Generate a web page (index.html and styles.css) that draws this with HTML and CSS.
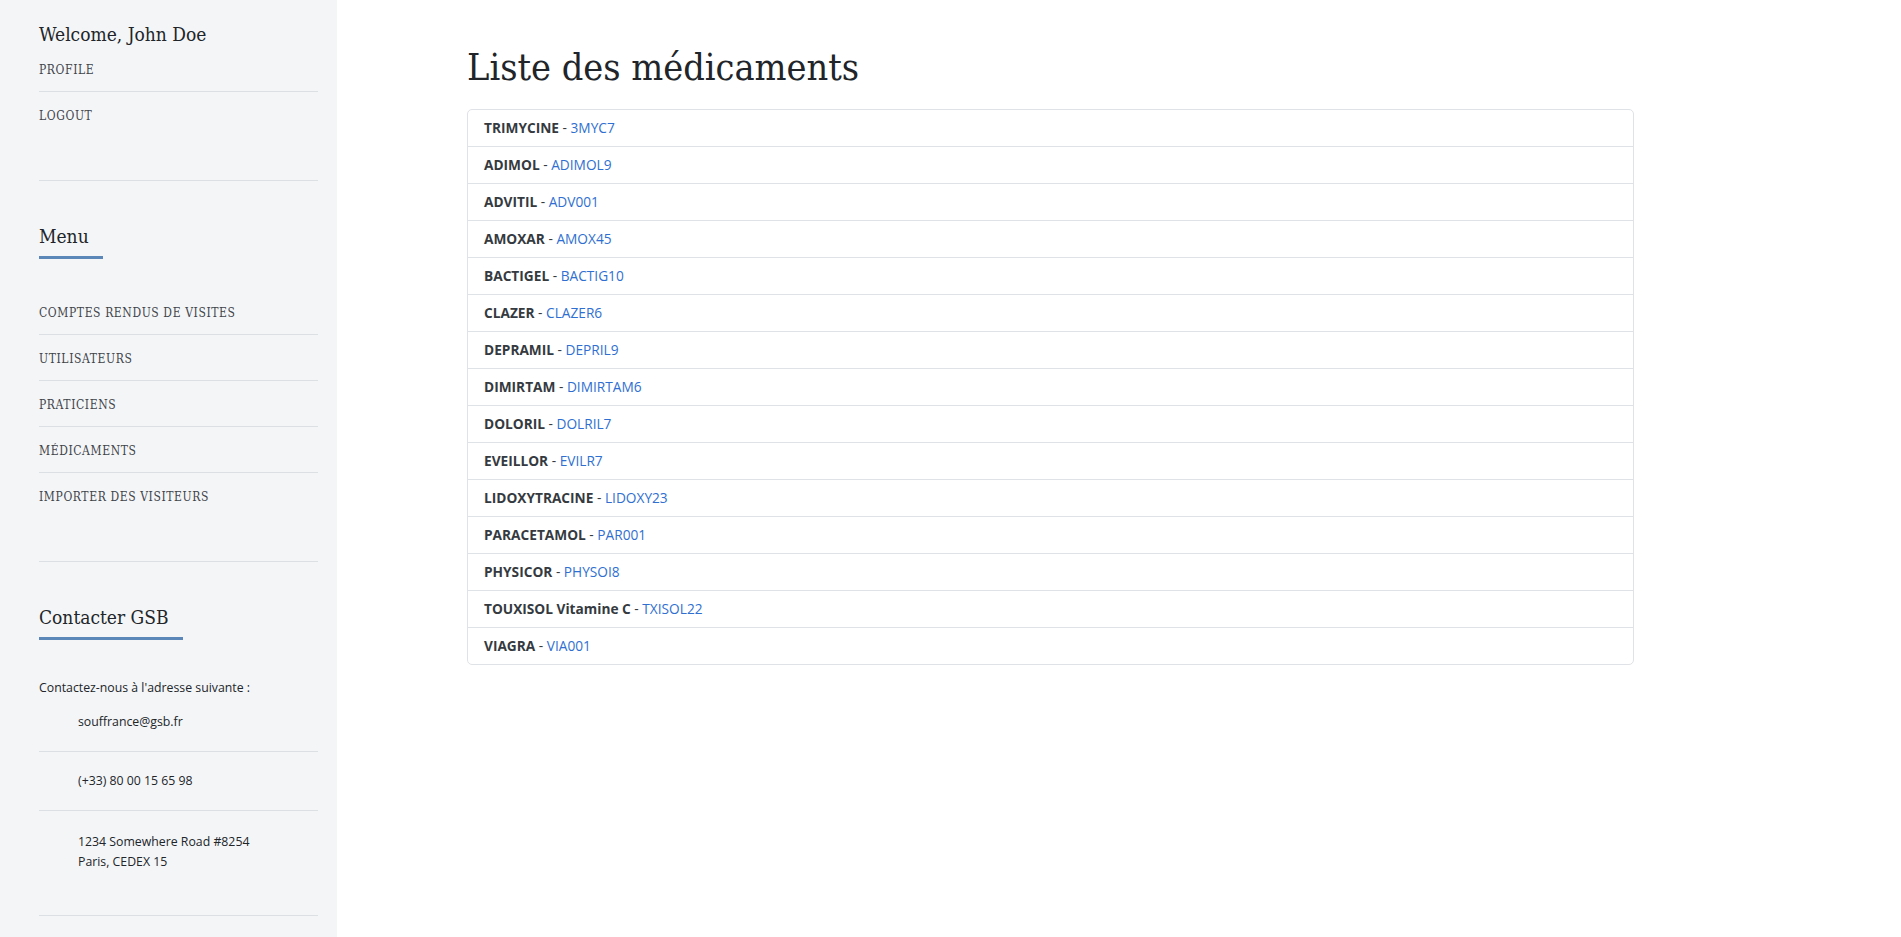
FILE: index.html
```html
<!DOCTYPE html>
<html lang="fr">
<head>
<meta charset="utf-8">
<title>Liste des médicaments</title>
<link rel="stylesheet" href="styles.css">
</head>
<body>
<aside class="sidebar">
  <section class="block block-user">
    <h3 class="welcome">Welcome, John Doe</h3>
    <ul class="nav">
      <li><a href="#">Profile</a></li>
      <li><a href="#">Logout</a></li>
    </ul>
  </section>
  <section class="block">
    <h2 class="block-title">Menu</h2>
    <ul class="nav nav-menu">
      <li><a href="#">Comptes rendus de visites</a></li>
      <li><a href="#">Utilisateurs</a></li>
      <li><a href="#">Praticiens</a></li>
      <li><a href="#">Médicaments</a></li>
      <li><a href="#">Importer des visiteurs</a></li>
    </ul>
  </section>
  <section class="block block-contact">
    <h2 class="block-title">Contacter GSB</h2>
    <p class="contact-intro">Contactez-nous à l'adresse suivante :</p>
    <ul class="contact">
      <li class="contact-item contact-first">souffrance@gsb.fr</li>
      <li class="contact-item">(+33) 80 00 15 65 98</li>
      <li class="contact-item contact-last">1234 Somewhere Road #8254<br>Paris, CEDEX 15</li>
    </ul>
  </section>
</aside>
<main class="main">
  <h1 class="page-title">Liste des médicaments</h1>
  <ul class="list-group">
    <li class="list-item"><strong>TRIMYCINE</strong> - <span class="code">3MYC7</span></li>
    <li class="list-item"><strong>ADIMOL</strong> - <span class="code">ADIMOL9</span></li>
    <li class="list-item"><strong>ADVITIL</strong> - <span class="code">ADV001</span></li>
    <li class="list-item"><strong>AMOXAR</strong> - <span class="code">AMOX45</span></li>
    <li class="list-item"><strong>BACTIGEL</strong> - <span class="code">BACTIG10</span></li>
    <li class="list-item"><strong>CLAZER</strong> - <span class="code">CLAZER6</span></li>
    <li class="list-item"><strong>DEPRAMIL</strong> - <span class="code">DEPRIL9</span></li>
    <li class="list-item"><strong>DIMIRTAM</strong> - <span class="code">DIMIRTAM6</span></li>
    <li class="list-item"><strong>DOLORIL</strong> - <span class="code">DOLRIL7</span></li>
    <li class="list-item"><strong>EVEILLOR</strong> - <span class="code">EVILR7</span></li>
    <li class="list-item"><strong>LIDOXYTRACINE</strong> - <span class="code">LIDOXY23</span></li>
    <li class="list-item"><strong>PARACETAMOL</strong> - <span class="code">PAR001</span></li>
    <li class="list-item"><strong>PHYSICOR</strong> - <span class="code">PHYSOI8</span></li>
    <li class="list-item"><strong>TOUXISOL Vitamine C</strong> - <span class="code">TXISOL22</span></li>
    <li class="list-item"><strong>VIAGRA</strong> - <span class="code">VIA001</span></li>
  </ul>
</main>
</body>
</html>
```
FILE: styles.css
```css
* { box-sizing: border-box; }
html, body { margin: 0; padding: 0; }
body {
  display: flex;
  min-height: 100vh;
  font-family: "Open Sans", "Noto Sans", sans-serif;
  color: #212529;
  background: #fff;
}
ul { list-style: none; margin: 0; padding: 0; }
a { text-decoration: none; color: inherit; }

.sidebar {
  width: 337px;
  flex: 0 0 337px;
  background: #f4f5f7;
  padding: 22px 19px 0 39px;
}
.block {
  border-bottom: 1px solid #dcdfe3;
  padding-bottom: 43px;
}
.block + .block { padding-top: 43px; }
.welcome {
  margin: 0;
  font-family: "DejaVu Serif", serif;
  font-stretch: condensed;
  font-weight: 400;
  font-size: 19px;
  line-height: 24px;
  color: #212529;
}
.nav li { border-bottom: 1px solid #dcdfe3; }
.nav li:last-child { border-bottom: 0; }
.nav a {
  display: block;
  padding: 15px 0 12px;
  font-family: "DejaVu Serif", serif;
  font-stretch: condensed;
  font-size: 12px;
  line-height: 18px;
  letter-spacing: 0.6px;
  text-transform: uppercase;
  color: #3f444a;
}
.block-title {
  display: inline-block;
  margin: 0;
  padding: 0 14px 8px 0;
  border-bottom: 3px solid #5b87b8;
  font-family: "DejaVu Serif", serif;
  font-stretch: condensed;
  font-weight: 400;
  font-size: 19px;
  line-height: 24px;
  color: #212529;
}
.nav-menu { margin-top: 30px; }

.contact-intro {
  margin: 39px 0 0;
  font-size: 12.3px;
  line-height: 18px;
  color: #212529;
}
.contact-item {
  padding: 20px 0 20px 39px;
  font-size: 12.3px;
  line-height: 18px;
  color: #212529;
  border-bottom: 1px solid #dcdfe3;
}
.contact-first { padding-top: 16px; }
.contact-last {
  padding-top: 21px;
  padding-bottom: 44px;
  line-height: 19.5px;
  border-bottom: 0;
}
.block-contact { padding-bottom: 0; }

.main {
  flex: 1;
  padding: 43px 0 0 130px;
}
.page-title {
  margin: 0 0 18px;
  font-family: "DejaVu Serif", serif;
  font-stretch: condensed;
  font-weight: 400;
  font-size: 37.5px;
  line-height: 48px;
  color: #212529;
}
.list-group {
  width: 1167px;
  border: 1px solid #dfe2e6;
  border-radius: 5px;
}
.list-item {
  padding: 8px 16px;
  font-size: 13.7px;
  line-height: 20px;
  color: #343a40;
  border-top: 1px solid #dfe2e6;
}
.list-item:first-child { border-top: 0; }
.list-item strong { font-weight: 700; color: #343a40; }
.code { color: #2f6fd1; }
```
